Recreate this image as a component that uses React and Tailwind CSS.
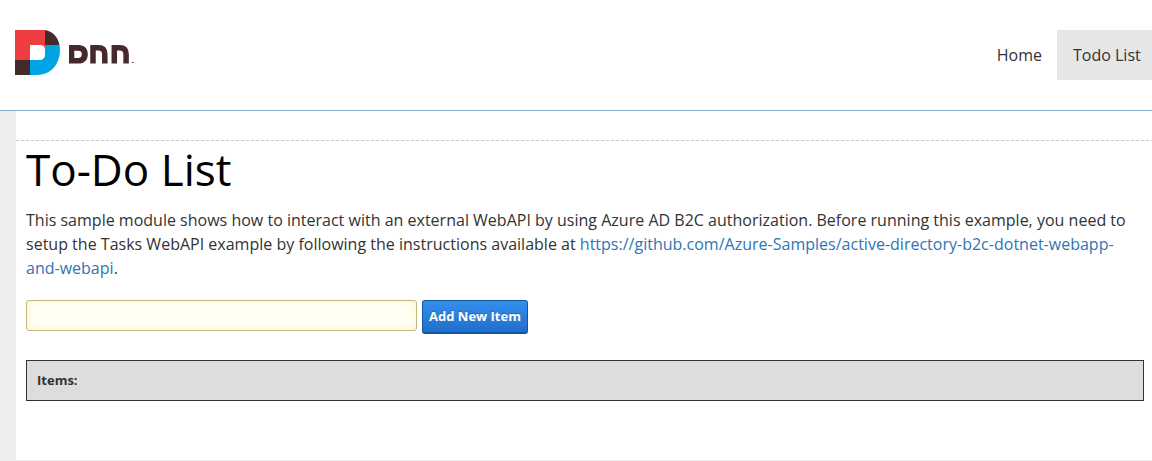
function Logo() {
  return (
    <svg className="block" width="122" height="46" viewBox="0 0 122 46" role="img" aria-label="DNN">
      <path fill="#ef3e42" d="M0 0h30v15H15v15H0z" />
      <path fill="#46292b" d="M30 0c8.500 1.500 13.200 8 14.500 15H30z" />
      <path fill="#46292b" d="M0 30h15v15H0z" />
      <path fill="#00a4e4" d="M30 15h14.500c2.500 16-6.500 30-22.500 30H15V30h9c4 0 6-2 6-6z" />
      <path fill="#ef3e42" d="M25 15h5v4c-.4-2.400-2-4-5-4z" />
      <path fill="#46292b" fillRule="evenodd" d="M54 15h9.500c6 0 9.300 3.600 9.300 9.200s-3.300 9.300-9.300 9.300H54zM59.300 20.700v7.300h3.700c2.500 0 3.800-1.200 3.800-3.700s-1.300-3.600-3.800-3.600z" />
      <path fill="none" stroke="#46292b" strokeWidth="5.500" d="M78 33.500V17.800h5.400c4.200 0 6.400 2.200 6.400 6.400v9.300M99.300 33.500V17.800h5.400c4.200 0 6.400 2.200 6.400 6.400v9.300" />
      <path fill="#8c7778" d="M116.500 32h2.500v1h-2.500z" />
    </svg>
  );
}

export default function App() {
  return (
    <div className="flex h-[461px] w-full flex-col overflow-hidden bg-white font-['Open_Sans',sans-serif] text-[#333]">
      <header className="flex h-[111px] shrink-0 items-start justify-between border-b border-[#86adcb] pl-[15px] pt-[30px]">
        <Logo />
        <nav className="flex text-base leading-[50px]">
          <a href="#home" className="px-[15px]">Home</a>
          <a href="#todo" className="w-[95px] bg-[#e6e6e6] pl-4">Todo List</a>
        </nav>
      </header>
      <div className="flex min-h-0 flex-1 bg-[#eee] pl-4">
        <main className="mb-px flex-1 bg-white pt-[29px]">
          <svg className="block h-px w-full" aria-hidden="true">
            <line x1="0" y1="0.5" x2="100%" y2="0.5" stroke="#c8c8c8" strokeDasharray="3 2" />
          </svg>
          <div className="pl-2.5 pr-2">
            <h1 className="mb-[11px] text-[44px] leading-[56px] text-black">To-Do List</h1>
            <p className="text-base leading-6 tracking-[0.008px]">
              This sample module shows how to interact with an external WebAPI by using Azure AD B2C authorization. Before running this example, you need to setup the Tasks WebAPI example by following the instructions available at{" "}
              <a href="#samples" className="text-[#3075b5]">https://github.com/Azure-Samples/active-directory-b2c-dotnet-webapp-and-webapi</a>.
            </p>
            <div className="mt-5 flex items-start gap-[5px]">
              <input aria-label="New item" className="h-[31px] w-[391px] rounded-[3px] border border-[#c2b886] bg-[#fffff5] px-2 text-sm shadow-[inset_0_0_8px_#fff3c4] outline-none" />
              <button className="h-[34px] w-[106px] rounded-[3px] border border-[#0f569d] border-b-2 bg-linear-to-b from-[#358eec] to-[#206ecd] text-[13px] font-bold text-white [text-shadow:0_-1px_0_#0003]">Add New Item</button>
            </div>
            <div className="mt-[26px] h-[41px] border border-[#333] bg-[#ddd] pl-2.5 text-[13px] font-bold leading-[39px]">Items:</div>
          </div>
        </main>
      </div>
    </div>
  );
}
